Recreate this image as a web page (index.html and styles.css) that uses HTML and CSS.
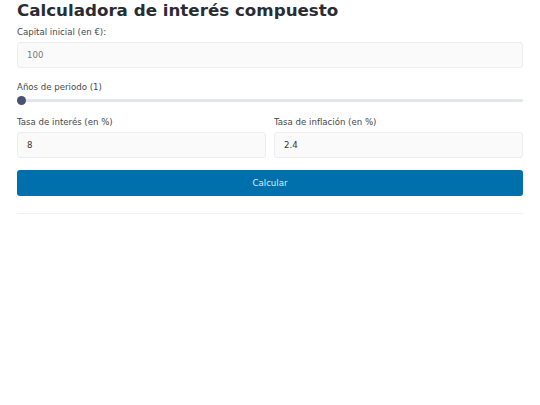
FILE: index.html
```html
<!DOCTYPE html>
<html lang="es">
<head>
  <meta charset="UTF-8">
  <meta name="viewport" content="width=device-width, initial-scale=1.0">
  <title>Calculadora de interés compuesto</title>
  <link rel="stylesheet" href="styles.css">
</head>
<body>

  <div class="calc-container">
    <h1>Calculadora de interés compuesto</h1>

    <label for="capital">Capital inicial (en €):</label>
    <input type="text" id="capital" class="muted" value="100">

    <label for="anios">Años de periodo (1)</label>
    <div class="range-track">
      <span class="range-thumb"></span>
    </div>

    <div class="form-row">
      <div>
        <label for="interes">Tasa de interés (en %)</label>
        <input type="text" id="interes" value="8">
      </div>
      <div>
        <label for="inflacion">Tasa de inflación (en %)</label>
        <input type="text" id="inflacion" value="2.4">
      </div>
    </div>

    <button type="button">Calcular</button>

    <hr>
  </div>

</body>
</html>
```

FILE: styles.css
```css
* {
  margin: 0;
  padding: 0;
  box-sizing: border-box;
}

body {
  font-family: "DejaVu Sans", Verdana, sans-serif;
  background-color: #ffffff;
  color: #2b2d33;
}

.calc-container {
  padding: 0 17px;
}

h1 {
  font-size: 16.7px;
  font-weight: bold;
  line-height: 20px;
  margin-bottom: 7px;
  color: #2a2c33;
}

label {
  display: block;
  font-size: 8.6px;
  line-height: 11px;
  margin-bottom: 4px;
  color: #44464d;
}

input {
  display: block;
  width: 100%;
  height: 26px;
  padding: 0 9px;
  margin-bottom: 14px;
  border: 1px solid #ebedf0;
  border-radius: 3px;
  background-color: #fafafa;
  font-family: inherit;
  font-size: 8.6px;
  color: #333;
}

input.muted {
  color: #777;
}

.range-track {
  position: relative;
  height: 3px;
  margin: 6px 0 15px;
  background-color: #e3e5ec;
  border-radius: 2px;
}

.range-thumb {
  position: absolute;
  left: 0;
  top: -3px;
  width: 9px;
  height: 9px;
  border-radius: 50%;
  background-color: #4a5272;
}

.form-row {
  display: grid;
  grid-template-columns: 1fr 1fr;
  gap: 8px;
}

.form-row input {
  margin-bottom: 12px;
}

button {
  display: block;
  width: 100%;
  height: 26px;
  border: none;
  border-radius: 3px;
  background-color: #0070ad;
  color: #d8ecf7;
  font-family: inherit;
  font-size: 8.6px;
  cursor: pointer;
}

hr {
  border: none;
  border-top: 1px solid #eff0f3;
  margin-top: 17px;
}
```
